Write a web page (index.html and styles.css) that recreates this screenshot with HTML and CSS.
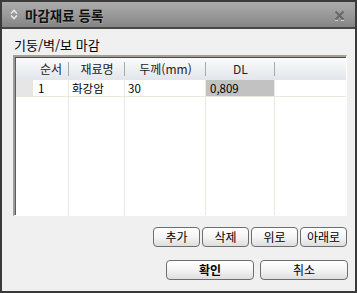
FILE: index.html
```html
<!DOCTYPE html>
<html lang="ko">

<head>
    <meta charset="utf-8">
    <title>마감재료 등록</title>
    <link rel="stylesheet" href="styles.css">
</head>

<body>
    <div class="window">
        <div class="titlebar">
            <svg class="title-icon" width="8" height="11" viewBox="0 0 8 11">
                <path d="M1 4.5 L4 1.5 L7 4.5" fill="none" stroke="#e8e8e8" stroke-width="1.6"/>
                <path d="M1 6.5 L4 9.5 L7 6.5" fill="none" stroke="#e8e8e8" stroke-width="1.6"/>
            </svg>
            <span class="title">마감재료 등록</span>
            <svg class="close" width="11" height="11" viewBox="0 0 11 11">
                <path d="M1.5 1.5 L9.5 9.5 M9.5 1.5 L1.5 9.5" stroke="#686868" stroke-width="2"/>
                <path d="M1 10.5 L4 10.5 M7 10.5 L10 10.5" stroke="#d0d0d0" stroke-width="1"/>
            </svg>
        </div>

        <div class="content">
            <div class="label">기둥/벽/보 마감</div>

            <div class="grid">
                <div class="grid-inner">
                    <div class="grid-head">
                        <div class="hcell"></div>
                        <div class="hcell sep">순서</div>
                        <div class="hcell sep">재료명</div>
                        <div class="hcell sep">두께(mm)</div>
                        <div class="hcell sep">DL</div>
                        <div class="hcell"></div>
                    </div>
                    <div class="grid-row">
                        <div class="cell indicator"></div>
                        <div class="cell num">1</div>
                        <div class="cell">화강암</div>
                        <div class="cell">30</div>
                        <div class="cell selected">0,809</div>
                        <div class="cell last"></div>
                    </div>
                    <div class="grid-rest">
                        <div class="rcell noline"></div>
                        <div class="rcell"></div>
                        <div class="rcell"></div>
                        <div class="rcell"></div>
                        <div class="rcell"></div>
                        <div class="rcell noline"></div>
                    </div>
                </div>
            </div>

            <div class="btn-row">
                <button class="btn small">추가</button>
                <button class="btn small">삭제</button>
                <button class="btn small">위로</button>
                <button class="btn small">아래로</button>
            </div>

            <div class="btn-row main">
                <button class="btn wide bold">확인</button>
                <button class="btn wide">취소</button>
            </div>
        </div>
    </div>
</body>

</html>
```

FILE: styles.css
```css
body {
    margin: 0;
    padding: 0;
    font-family: "Noto Sans CJK KR", "Liberation Sans", sans-serif;
    font-size: 12px;
    color: #000;
}

.window {
    width: 357px;
    height: 293px;
    box-sizing: border-box;
    border: 2px solid #3a3a3a;
    background-color: #f0f0f0;
    display: flex;
    flex-direction: column;
}

.titlebar {
    height: 25px;
    border-bottom: 2px solid #474747;
    background: linear-gradient(#ababab, #9a9a9a 50%, #848484);
    display: flex;
    align-items: center;
    padding: 0 10px 0 8px;
}

.title-icon {
    margin-right: 7px;
}

.title {
    font-size: 13.5px;
    font-weight: 700;
    color: #111;
    line-height: 16px;
    text-shadow: 1px 1px 0 rgba(200, 200, 200, 0.35);
    flex: 1;
}

.close {
    margin-top: 1px;
}

.content {
    padding: 8px 8px 0 11px;
    display: flex;
    flex-direction: column;
}

.label {
    font-size: 13px;
    line-height: 16px;
    padding-left: 1px;
}

.grid {
    margin-top: 2px;
    height: 161px;
    box-sizing: border-box;
    border-top: 2px solid #a3a196;
    border-left: 2px solid #9c9c9c;
    border-right: 1px solid #fff;
    border-bottom: 1px solid #fff;
    display: flex;
}

.grid-inner {
    flex: 1;
    border-top: 1px solid #4a4a4a;
    border-left: 1px solid #5a5a5a;
    background-color: #fff;
    display: flex;
    flex-direction: column;
    font-size: 11.5px;
}

.grid-head,
.grid-row,
.grid-rest {
    display: grid;
    grid-template-columns: 17px 36px 56px 81px 69px 1fr;
}

.grid-head {
    height: 22px;
    background: linear-gradient(#fbfbfc, #eef0f3 50%, #e2e5eb);
    font-size: 12px;
}

.hcell {
    display: flex;
    align-items: center;
    justify-content: center;
    line-height: 14px;
    color: #222;
}

.hcell.sep {
    position: relative;
}

.hcell.sep::after {
    content: "";
    position: absolute;
    right: 0;
    top: 4px;
    bottom: 4px;
    width: 1px;
    background-color: #a7a9ad;
}

.grid-row {
    height: 16px;
    border-bottom: 1px solid #ebe9de;
}

.cell {
    border-right: 1px solid #ebe9de;
    line-height: 16px;
    padding-left: 3px;
    white-space: nowrap;
}

.cell.num {
    padding-left: 5px;
}

.cell.indicator {
    background-color: #e6e6e6;
    border-right: none;
    padding: 0;
}

.cell.selected {
    background-color: #c2c2c2;
    padding-left: 4px;
}

.cell.last {
    border-right: none;
}

.grid-rest {
    flex: 1;
}

.rcell {
    border-right: 1px solid #ebe9de;
}

.rcell.noline {
    border-right: none;
}

.btn-row {
    display: flex;
    justify-content: flex-end;
    gap: 2px;
    margin-top: 11px;
}

.btn-row.main {
    margin-top: 13px;
    gap: 6px;
    margin-right: -1px;
}

.btn {
    height: 20px;
    box-sizing: border-box;
    border: 1px solid #6e6e6e;
    border-radius: 4px;
    background: linear-gradient(#ffffff, #f4f4f4 50%, #dedede);
    font-family: "Noto Sans CJK KR", "Liberation Sans", sans-serif;
    font-size: 12px;
    line-height: 16px;
    color: #000;
    padding: 0;
    cursor: pointer;
}

.btn.small {
    width: 47px;
}

.btn.wide {
    width: 88px;
}

.btn.bold {
    font-weight: 700;
}
```
